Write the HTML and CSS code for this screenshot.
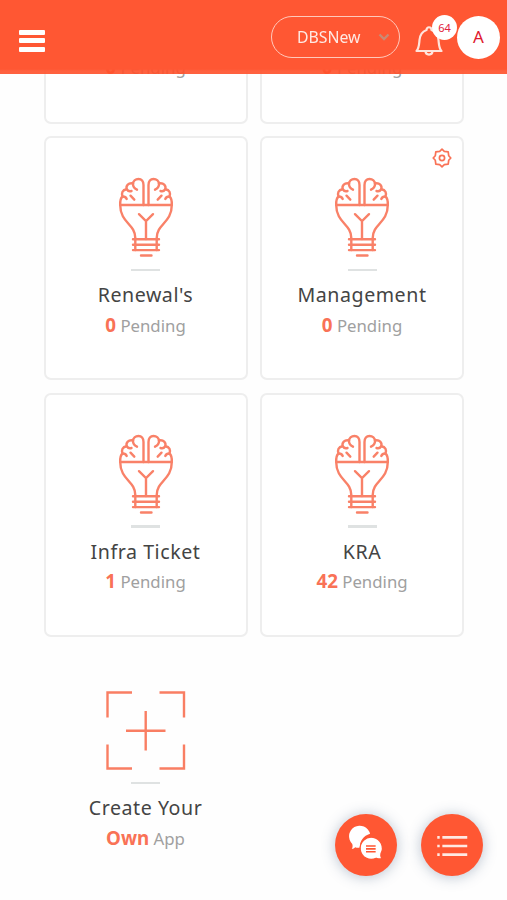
FILE: index.html
```html
<!DOCTYPE html>
<html lang="en">
<head>
    <meta charset="UTF-8">
    <meta name="viewport" content="width=device-width, initial-scale=1.0">
    <title>DBSNew</title>
    <link rel="stylesheet" href="styles.css">
</head>
<body>
    <!-- shared icons -->
    <svg class="sprite" aria-hidden="true">
        <symbol id="icon-bulb" viewBox="0 0 54 80">
            <g fill="none" stroke="#f98168" stroke-width="2.400" stroke-linecap="round">
                <g id="brain-half">
                    <path d="M24.500 28V8C24.500 4 22.500 2 19.500 2C16.500 2 14 4.200 14 7.200C14 9.500 15.500 11.500 18 12.700"/>
                    <path d="M14 6.500C9.500 5.500 6.700 8.500 7.700 12.200C8.700 14 10.500 14.700 12.500 14"/>
                    <path d="M7.500 12.200C3.500 12.800 2.200 16.200 3.500 19.500C1.800 21 1 24 1.200 28"/>
                    <path d="M3.800 19.500C5.800 19.500 7 20.200 7.700 22"/>
                    <path d="M11.500 18.700L15.300 22.700"/>
                </g>
                <use href="#brain-half" transform="matrix(-1 0 0 1 54 0)"/>
                <path d="M1.200 28H52.800C52.800 46 37.700 47 37.700 61V73M16.300 73V61C16.300 47 1.200 46 1.200 28"/>
                <path d="M20 37.200L27 44L34 37.200M27 44V62"/>
                <path d="M14 62.300H40M14 67.700H40M14 73.100H40M22 78.500H32.500"/>
            </g>
        </symbol>
    </svg>

    <header class="topbar">
        <div class="menu-button"><span></span><span></span><span></span></div>
        <div class="topbar-right">
            <div class="company-select">
                <span>DBSNew</span>
                <svg class="chevron" viewBox="0 0 12 8"><path d="M1.500 1.500L6 6L10.500 1.500" fill="none" stroke="#c98a74" stroke-width="2.400"/></svg>
            </div>
            <div class="notifications">
                <svg class="bell" viewBox="0 0 28 32">
                    <g fill="none" stroke="#ffe4dc" stroke-width="2.200" stroke-linejoin="round">
                        <path d="M1.500 26C4 23.500 4 20 4.500 15C5 9.500 7.500 6.500 11.500 5C11.500 1.300 16.500 1.300 16.500 5C20.500 6.500 23 9.500 23.500 15C24 20 24 23.500 26.500 26Z"/>
                        <path d="M10.500 26C10.500 30.700 17.500 30.700 17.500 26"/>
                    </g>
                </svg>
                <span class="badge">64</span>
            </div>
            <div class="avatar">A</div>
        </div>
    </header>

    <main class="apps">
        <!-- row scrolled under the top bar -->
        <div class="card card-scrolled">
            <div class="status"><b>0</b> Pending</div>
        </div>
        <div class="card card-scrolled">
            <div class="status"><b>0</b> Pending</div>
        </div>
        <div class="card">
            <svg class="app-icon"><use href="#icon-bulb"/></svg>
            <div class="divider"></div>
            <div class="name">Renewal's</div>
            <div class="status"><b>0</b> Pending</div>
        </div>
        <div class="card">
            <svg class="gear" viewBox="0 0 20 20">
                <g fill="none" stroke="#f97256" stroke-width="1.700" stroke-linejoin="round">
                    <path d="M10 1.200L12.300 3.300L16.200 3.800L16.700 7.700L18.800 10L16.700 12.300L16.200 16.200L12.300 16.700L10 18.800L7.700 16.700L3.800 16.200L3.300 12.300L1.200 10L3.300 7.700L3.800 3.800L7.700 3.300Z"/>
                    <circle cx="10" cy="10" r="2.600"/>
                </g>
            </svg>
            <svg class="app-icon"><use href="#icon-bulb"/></svg>
            <div class="divider"></div>
            <div class="name">Management</div>
            <div class="status"><b>0</b> Pending</div>
        </div>
        <div class="card">
            <svg class="app-icon"><use href="#icon-bulb"/></svg>
            <div class="divider"></div>
            <div class="name">Infra Ticket</div>
            <div class="status"><b>1</b> Pending</div>
        </div>
        <div class="card">
            <svg class="app-icon"><use href="#icon-bulb"/></svg>
            <div class="divider"></div>
            <div class="name">KRA</div>
            <div class="status"><b>42</b> Pending</div>
        </div>
        <div class="card card-create">
            <svg class="app-icon" viewBox="0 0 80 80">
                <path d="M26 2.500H1.500V27.500M53.500 2.500H78V27.500M1.500 54.500V78.500H26M78 54.500V78.500H53.500M39.700 21V60.500M20 40.700H59.500" fill="none" stroke="#f97e63" stroke-width="2.400"/>
            </svg>
            <div class="divider"></div>
            <div class="name">Create Your</div>
            <div class="status"><b>Own</b> App</div>
        </div>
    </main>

    <div class="fabs">
        <div class="fab">
            <svg viewBox="0 0 61 61">
                <path d="M16.500 34.500C17.300 33 17.600 31.500 17 29.500A10.500 10.500 0 1 1 34.500 19.500C28 21.500 24.300 26.500 24.500 33C22.800 33.500 21 33.200 20 32.700C19 33.700 17.800 34.300 16.500 34.500Z" fill="#fff"/>
                <path d="M46 44C45 42 44.800 40.500 45.200 39A10.900 10.900 0 1 0 40.500 43.500C42.300 44.200 44.300 44.300 46 44Z" fill="#fff" stroke="#ff5733" stroke-width="1.200"/>
                <path d="M30.500 31.500H40M30.500 34.300H40M30.500 37.100H40" stroke="#ff5733" stroke-width="1.600"/>
            </svg>
        </div>
        <div class="fab">
            <svg viewBox="0 0 61 61">
                <path d="M16 23H18.400M16 31.500H18.400M16 40H18.400M21 23H45.500M21 31.500H45.500M21 40H45.500" stroke="#ffe9e3" stroke-width="2.600"/>
            </svg>
        </div>
    </div>
</body>
</html>
```
FILE: styles.css
```css
* {
    box-sizing: border-box;
}
body {
    margin: 0;
    height: 900px;
    overflow: hidden;
    background-color: #fefefe;
    font-family: "Noto Sans", "Open Sans", sans-serif;
}
.sprite {
    position: absolute;
    width: 0;
    height: 0;
}
.topbar {
    position: fixed;
    top: 0;
    left: 0;
    width: 100%;
    height: 74px;
    padding: 0 7px 0 19px;
    display: flex;
    justify-content: space-between;
    align-items: center;
    background: linear-gradient(#ff5733 69px, rgba(255, 80, 42, 0.9) 71px);
    z-index: 10;
}
.menu-button {
    width: 26px;
    padding-top: 7px;
    display: flex;
    flex-direction: column;
    gap: 3.5px;
}
.menu-button span {
    height: 5px;
    border-radius: 1px;
    background-color: #fff;
}
.topbar-right {
    display: flex;
    align-items: center;
}
.company-select {
    width: 129px;
    height: 42px;
    margin-right: 15px;
    padding: 0 9px 0 25px;
    display: flex;
    align-items: center;
    justify-content: space-between;
    border: 1.5px solid #ffc9bb;
    border-radius: 21px;
    color: #ffe9e3;
    font-size: 15.8px;
}
.company-select span {
    margin-top: -1px;
}
.chevron {
    width: 12px;
    height: 8px;
}
.notifications {
    position: relative;
    width: 28px;
    height: 32px;
    margin-right: 14px;
    top: 4px;
}
.bell {
    display: block;
    width: 28px;
    height: 32px;
}
.badge {
    position: absolute;
    top: -10px;
    left: 17px;
    width: 25px;
    height: 25px;
    line-height: 25px;
    border-radius: 50%;
    background-color: #fff;
    color: #e2203c;
    font-size: 11px;
    text-align: center;
}
.avatar {
    width: 43px;
    height: 43px;
    line-height: 42px;
    border-radius: 50%;
    background-color: #fff;
    color: #e0182d;
    font-size: 17px;
    text-align: center;
}
.apps {
    margin: -120.5px auto 0;
    padding-left: 0.5px;
    width: 421px;
    display: grid;
    grid-template-columns: 204px 204px;
    grid-auto-rows: 244px;
    gap: 12.5px;
}
.card {
    position: relative;
    padding-top: 39px;
    display: flex;
    flex-direction: column;
    align-items: center;
    border: 2px solid #eee;
    border-radius: 7px;
    background-color: #fff;
}
.card-scrolled {
    padding-top: 170px;
}
.card-create {
    border-color: transparent;
    background-color: transparent;
}
.app-icon {
    width: 80px;
    height: 80px;
}
.gear {
    position: absolute;
    top: 10px;
    right: 10px;
    width: 20px;
    height: 20px;
}
.divider {
    width: 29px;
    height: 2.5px;
    margin-top: 11.5px;
    background-color: #dfe2e2;
}
.name {
    margin-top: 10px;
    line-height: 28px;
    font-size: 19.6px;
    letter-spacing: 0.55px;
    color: #444;
}
.status {
    margin-top: 1.5px;
    line-height: 28px;
    font-size: 16.8px;
    color: #a0a0a0;
}
.status b {
    font-size: 18.8px;
    color: #f97256;
}
.fabs {
    position: fixed;
    right: 24px;
    bottom: 24px;
    display: flex;
    gap: 24px;
}
.fab {
    width: 62px;
    height: 62px;
    border-radius: 50%;
    background-color: #ff5733;
    box-shadow: 0 1px 14px rgba(70, 95, 130, 0.38);
}
```
